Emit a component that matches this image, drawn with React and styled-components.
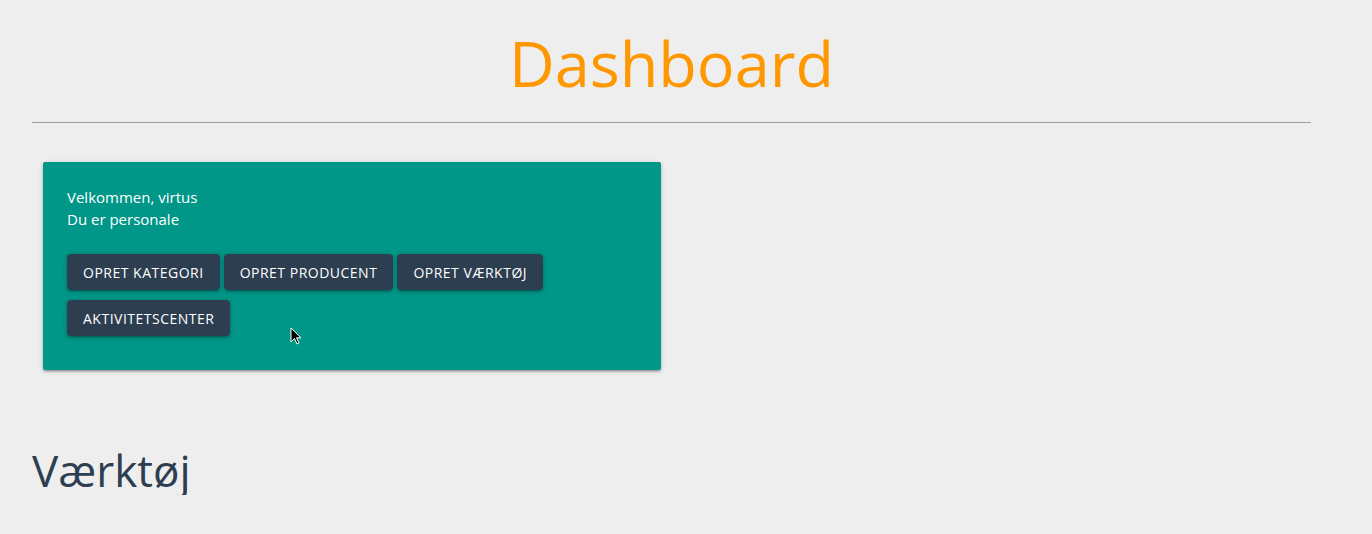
import styled, { createGlobalStyle } from "styled-components";

const GlobalStyle = createGlobalStyle`
  body {
    margin: 0;
    background: #eeeeee;
    font-family: "Open Sans", "Noto Sans", sans-serif;
  }
`;

const buttons = [
  "Opret kategori",
  "Opret producent",
  "Opret værktøj",
  "Aktivitetscenter",
];

function App() {
  return (
    <>
      <GlobalStyle />
      <Page>
        <Title>Dashboard</Title>
        <Divider />
        <Row>
          <Col>
            <Card>
              <Greeting>
                Velkommen, virtus
                <br />
                Du er personale
              </Greeting>
              <Actions>
                {buttons.map((label) => (
                  <Button key={label}>{label}</Button>
                ))}
              </Actions>
              <Cursor viewBox="0 0 12 19" width="12" height="19">
                <path
                  d="M1 1 L1 15 L4.5 11.5 L7 17 L9 16 L6.5 10.8 L11 10.8 Z"
                  fill="#000"
                  stroke="#fff"
                  strokeWidth="1"
                  strokeLinejoin="round"
                />
              </Cursor>
            </Card>
          </Col>
        </Row>
        <Section>Værktøj</Section>
      </Page>
    </>
  );
}

export default App;

const Page = styled.div`
  width: 1279px;
  margin-left: 32px;
`;

const Title = styled.h1`
  margin: 24px 0 0;
  font-size: 63px;
  line-height: 77px;
  font-weight: 400;
  color: #ff9800;
  text-align: center;
`;

const Divider = styled.hr`
  margin: 21px 0 0;
  border: none;
  border-top: 1px solid #9e9e9e;
`;

const Row = styled.div`
  display: flex;
  margin-top: 39px;
`;

const Col = styled.div`
  width: 50%;
  padding: 0 11px;
  box-sizing: border-box;
`;

const Card = styled.div`
  position: relative;
  background: #009688;
  border-radius: 2px;
  padding: 24px 24px 34px;
  box-shadow: 0 2px 2px 0 rgba(0, 0, 0, 0.14), 0 3px 1px -2px rgba(0, 0, 0, 0.12),
    0 1px 5px 0 rgba(0, 0, 0, 0.2);
`;

const Greeting = styled.p`
  margin: 0 0 24px;
  color: #fff;
  font-size: 15px;
  line-height: 22px;
`;

const Actions = styled.div`
  display: flex;
  flex-wrap: wrap;
  gap: 10px 4px;
  width: 480px;
`;

const Button = styled.button`
  height: 36px;
  padding: 0 16px;
  border: none;
  border-radius: 4px;
  background: #2c3e50;
  color: #fff;
  font-family: inherit;
  font-size: 14px;
  letter-spacing: 0.5px;
  text-transform: uppercase;
  box-shadow: 0 2px 2px 0 rgba(0, 0, 0, 0.14), 0 3px 1px -2px rgba(0, 0, 0, 0.12),
    0 1px 5px 0 rgba(0, 0, 0, 0.2);
  cursor: pointer;
`;

const Cursor = styled.svg`
  position: absolute;
  left: 247px;
  top: 165px;
`;

const Section = styled.h2`
  margin: 75px 0 0;
  font-size: 44px;
  line-height: 50px;
  font-weight: 400;
  color: #2c3e50;
`;
